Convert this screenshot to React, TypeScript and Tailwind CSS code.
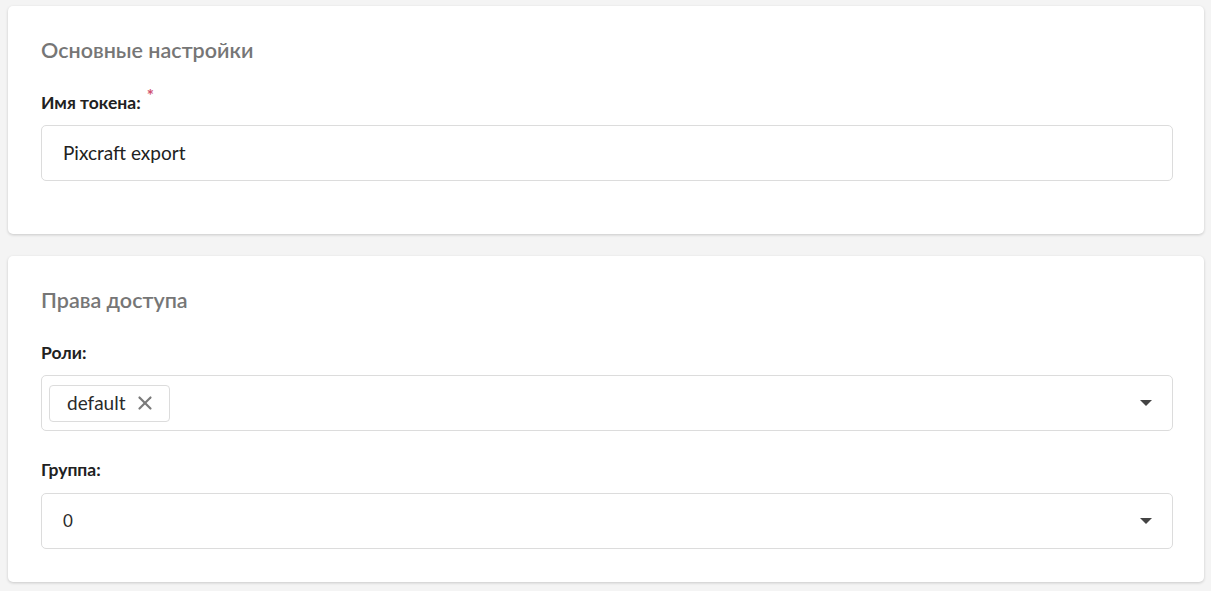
import { X } from 'lucide-react';

const font = { fontFamily: 'Lato, Roboto, "Noto Sans", sans-serif' };

function Caret() {
  return (
    <svg width="12" height="6" viewBox="0 0 12 6" className="shrink-0">
      <path d="M0 0 L12 0 L6 6 Z" fill="#444" />
    </svg>
  );
}

function Card({ title, children, extra = '' }: { title: string; children: React.ReactNode; extra?: string }) {
  return (
    <section className={`bg-white rounded-[5px] shadow-[0_1px_3px_rgba(0,0,0,0.18)] pl-[33px] pr-[31px] pt-8 ${extra}`}>
      <h2 className="text-[21.5px] leading-6 font-semibold text-[#767676] mb-[31px]">{title}</h2>
      {children}
    </section>
  );
}

export default function App() {
  return (
    <div className="min-h-screen bg-[#f4f4f4] pl-2 pr-[7px] pt-[6px] pb-2" style={font}>
      <div className="flex flex-col gap-[22px]">
        <Card title="Основные настройки" extra="pb-[53px]">
          <label className="flex items-start text-[17.5px] leading-5 font-bold text-[#212121] mb-3">
            Имя токена:
            <span className="ml-[6px] -mt-[5px] text-[17px] leading-4 text-[#d0506f]">*</span>
          </label>
          <div className="h-14 border border-[#dcdcdc] rounded-[5px] flex items-center px-[21px] text-[19px] text-[#212121]">
            Pixcraft export
          </div>
        </Card>

        <Card title="Права доступа" extra="pb-[33px]">
          <label className="block text-[17.5px] leading-5 font-bold text-[#212121] mb-3">Роли:</label>
          <div className="h-14 border border-[#dcdcdc] rounded-[5px] flex items-center pl-[7px] pr-[20px]">
            <div className="h-[37px] border border-[#dcdcdc] rounded-[4px] flex items-center pl-[17px] pr-[13px] gap-[8px] text-[19px] text-[#2a2a2a]">
              default
              <X size={22} strokeWidth={2.4} className="text-[#7a7a7a]" />
            </div>
            <div className="flex-1" />
            <Caret />
          </div>

          <label className="block text-[17.5px] leading-5 font-bold text-[#212121] mt-[29px] mb-[13px]">Группа:</label>
          <div className="h-14 border border-[#dcdcdc] rounded-[5px] flex items-center pl-[21px] pr-[20px] text-[17px] text-[#2a2a2a]">
            <span className="flex-1">0</span>
            <Caret />
          </div>
        </Card>
      </div>
    </div>
  );
}
